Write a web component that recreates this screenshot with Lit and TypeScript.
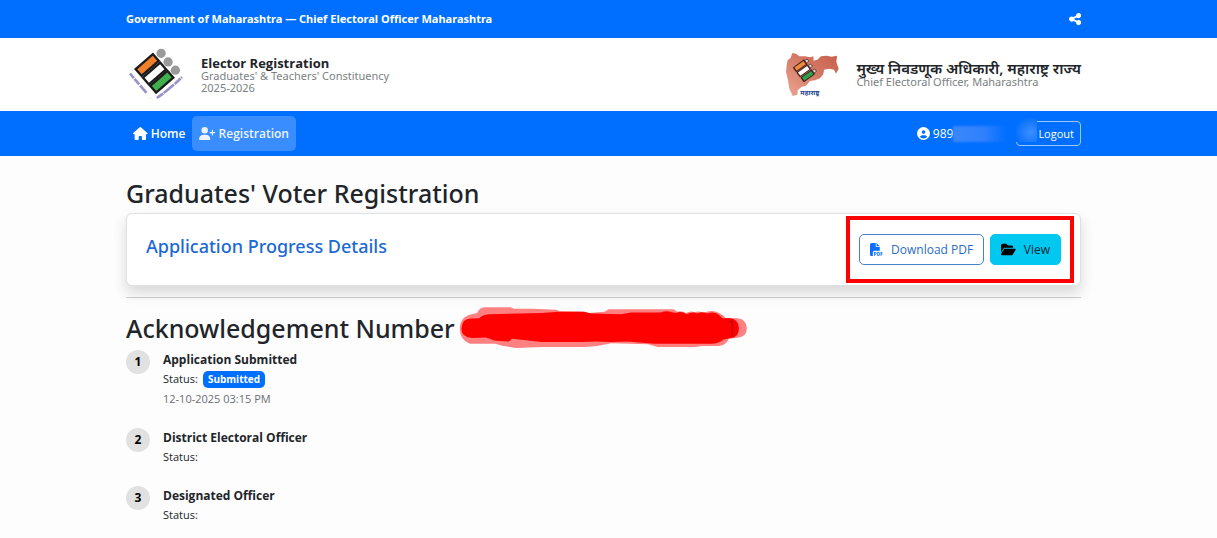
import { LitElement, html, css, svg, nothing } from "lit";
import { customElement, property } from "lit/decorators.js";

const ICONS: Record<string, [number, string]> = {
  share: [448, "M352 224c53 0 96-43 96-96s-43-96-96-96s-96 43-96 96c0 4 .2 8 .7 11.9l-94.1 47C145.4 170.2 121.9 160 96 160c-53 0-96 43-96 96s43 96 96 96c25.9 0 49.4-10.2 66.6-26.9l94.1 47c-.5 3.9-.7 7.8-.7 11.9c0 53 43 96 96 96s96-43 96-96s-43-96-96-96c-25.9 0-49.4 10.2-66.6 26.9l-94.1-47c.5-3.9 .7-7.8 .7-11.9s-.2-8-.7-11.9l94.1-47C302.6 213.8 326.1 224 352 224z"],
  house: [576, "M575.8 255.5c0 18-15 32.1-32 32.1h-32l.7 160.2c0 2.7-.2 5.4-.5 8.1V472c0 22.1-17.9 40-40 40H456c-1.1 0-2.2 0-3.3-.1c-1.4 .1-2.8 .1-4.2 .1H416 392c-22.1 0-40-17.9-40-40V448 384c0-17.7-14.3-32-32-32H256c-17.7 0-32 14.3-32 32v64 24c0 22.1-17.9 40-40 40H160 128.1c-1.5 0-3-.1-4.5-.2c-1.2 .1-2.4 .2-3.6 .2H104c-22.1 0-40-17.9-40-40V360c0-.9 0-1.9 .1-2.8V287.6H32c-18 0-32-14-32-32.1c0-9 3-17 10-24L266.4 8c7-7 15-8 22-8s15 2 21 7L564.8 231.5c8 7 12 15 11 24z"],
  userPlus: [640, "M96 128a128 128 0 1 1 256 0A128 128 0 1 1 96 128zM0 482.3C0 383.8 79.8 304 178.3 304h91.4C368.2 304 448 383.8 448 482.3c0 16.4-13.3 29.7-29.7 29.7H29.7C13.3 512 0 498.7 0 482.3zM504 312V248H440c-13.3 0-24-10.7-24-24s10.7-24 24-24h64V136c0-13.3 10.7-24 24-24s24 10.7 24 24v64h64c13.3 0 24 10.7 24 24s-10.7 24-24 24H552v64c0 13.3-10.7 24-24 24s-24-10.7-24-24z"],
  user: [512, "M399 384.2C376.9 345.8 335.4 320 288 320H224c-47.4 0-88.9 25.8-111 64.2c35.2 39.2 86.2 63.8 143 63.8s107.8-24.7 143-63.8zM0 256a256 256 0 1 1 512 0A256 256 0 1 1 0 256zm256 16a72 72 0 1 0 0-144 72 72 0 1 0 0 144z"],
  folder: [576, "M88.7 223.8L0 375.8V96C0 60.7 28.7 32 64 32H181.5c17 0 33.3 6.7 45.3 18.7l26.5 26.5c12 12 28.3 18.7 45.3 18.7H416c35.3 0 64 28.7 64 64v32H144c-22.8 0-43.8 12.1-55.3 31.8zm27.6 16.1C122.1 230 132.6 224 144 224H544c11.5 0 22 6.1 27.7 16.1s5.7 22.2-.1 32.1l-112 192C453.9 474 443.4 480 432 480H32c-11.5 0-22-6.1-27.7-16.1s-5.7-22.2 .1-32.1l112-192z"],
  pdf: [512, "M0 64C0 28.7 28.7 0 64 0H224V128c0 17.7 14.3 32 32 32H384V304H176c-35.3 0-64 28.7-64 64V512H64c-35.3 0-64-28.7-64-64V64zm384 64H256V0L384 128zM176 352h32c30.9 0 56 25.1 56 56s-25.1 56-56 56H192v32c0 8.8-7.2 16-16 16s-16-7.2-16-16V448 368c0-8.8 7.2-16 16-16zm32 80c13.3 0 24-10.7 24-24s-10.7-24-24-24H192v48h16zm96-80h32c26.5 0 48 21.5 48 48v64c0 26.5-21.5 48-48 48H304c-8.8 0-16-7.2-16-16V368c0-8.8 7.2-16 16-16zm32 128c8.8 0 16-7.2 16-16V400c0-8.8-7.2-16-16-16H320v96h16zm80-112c0-8.8 7.2-16 16-16h48c8.8 0 16 7.2 16 16s-7.2 16-16 16H448v32h32c8.8 0 16 7.2 16 16s-7.2 16-16 16H448v48c0 8.8-7.2 16-16 16s-16-7.2-16-16V432 368z"],
};

@customElement("fa-icon")
class FaIcon extends LitElement {
  @property() name = "house";
  static styles = css`
    :host { display: inline-flex; flex: none; }
    svg { display: block; height: var(--icon-size, 13px); width: auto; fill: currentColor; }
  `;
  render() {
    const [w, d] = ICONS[this.name];
    return html`<svg viewBox="0 0 ${w} 512" aria-hidden="true"><path d=${d}></path></svg>`;
  }
}

@customElement("commission-logo")
class CommissionLogo extends LitElement {
  static styles = css`
    :host { display: block; flex: none; }
    svg { display: block; width: 57px; height: 53px; }
  `;
  render() {
    const bar = (x: number, y: number, fill: string) => svg`
      <g transform="translate(${x} ${y}) rotate(-41)">
        <rect x="-38" y="-17" width="76" height="34" fill="#1c1a1a"></rect>
        <rect x="-31" y="-10" width="62" height="20" fill=${fill}></rect>
      </g>`;
    return html`<svg viewBox="55 140 170 160" role="img" aria-label="Election Commission emblem">
      ${bar(112, 191, "#f0802a")}${bar(156, 242, "#3fb04b")}${bar(134, 217, "#ffffff")}
      <g fill="#9a9a9a"><circle cx="154" cy="156" r="14"></circle><circle cx="175" cy="182" r="14"></circle><circle cx="197" cy="207" r="14"></circle></g>
      <g stroke="#9a92c8" stroke-width="8" fill="none">
        <path d="M60 217L122 290" stroke-dasharray="18 3 22 4 30"></path>
        <path d="M141 291Q180 264 217 228" stroke-dasharray="24 2 40 3"></path>
      </g>
    </svg>`;
  }
}

@customElement("state-logo")
class StateLogo extends LitElement {
  static styles = css`
    :host { display: block; flex: none; }
    svg { display: block; width: 55px; height: 45px; overflow: visible; }
    .name { font: 700 20px "Noto Sans Devanagari", "Noto Sans", sans-serif; fill: #24458c; }
  `;
  render() {
    const bar = (x: number, y: number, fill: string) => svg`
      <g transform="translate(${x} ${y}) rotate(-36)">
        <rect x="-22" y="-9" width="42" height="18" rx="2" fill="#3a201c"></rect>
        <rect x="-18" y="-6" width="34" height="12" fill=${fill}></rect>
        <circle cx="24" cy="0" r="5" fill="#e8d8d2" stroke="#3a201c" stroke-width="2"></circle>
      </g>`;
    return html`<svg viewBox="75 155 165 135" role="img" aria-label="Maharashtra">
      <defs><linearGradient id="g" x1="0" y1="1" x2="1" y2="0">
        <stop offset="0" stop-color="#eda693"></stop><stop offset=".5" stop-color="#d67c6a"></stop><stop offset="1" stop-color="#c65c47"></stop>
      </linearGradient></defs>
      <path fill="url(#g)" d="M83 180L92 172L97 158L108 160L118 168L135 168L150 171L160 168L161 181L172 178L183 168L200 166L215 169L231 166L229 185L236 205L228 220L222 208L208 205L192 208L190 222L180 234L165 240L150 242L138 256L124 260L113 270L112 283L98 287L88 265L84 240L78 215L80 195Z"></path>
      ${bar(121, 196, "#ef8a3c")}${bar(132, 211, "#ffffff")}${bar(144, 226, "#2fa04a")}
      <text class="name" x="121" y="283">महाराष्ट्र</text>
    </svg>`;
  }
}

interface Step { title: string; badge?: string; time?: string }

const STEPS: Step[] = [
  { title: "Application Submitted", badge: "Submitted", time: "12-10-2025 03:15 PM" },
  { title: "District Electoral Officer" },
  { title: "Designated Officer" },
];

@customElement("app-root")
class AppRoot extends LitElement {
  static styles = css`
    :host {
      display: block;
      min-height: 100vh;
      background: #fdfdfd;
      color: #212529;
      font-family: "Open Sans", "Noto Sans", "Noto Sans Devanagari", sans-serif;
      font-size: 12px;
      line-height: 18px;
    }
    * { box-sizing: border-box; }
    h1, h2, p, ol { margin: 0; padding: 0; }
    a { color: inherit; text-decoration: none; }
    button { font: inherit; cursor: pointer; }
    .band { padding-right: 10px; }
    .container { max-width: 955px; margin: 0 auto; }
    .row { display: flex; align-items: center; justify-content: space-between; }
    .blue { background: #006fff; color: #fff; }
    .top, .sub, h1, h2 { font-family: "Noto Sans", sans-serif; }
    .top .row { height: 38px; font-weight: 700; font-size: 11px; }
    .top fa-icon { display: block; --icon-size: 14px; }
    .header { background: #fff; }
    .header .row { height: 73px; }
    .brand { display: flex; align-items: center; gap: 16px; padding-left: 2px; }
    .name { font-size: 13px; font-weight: 700; line-height: 14px; }
    .sub { font-size: 11px; line-height: 12px; color: #7b7f83; }
    .hindi { font-size: 15px; font-weight: 600; line-height: 15px; }
    .nav .row { height: 45px; }
    .links, .account { display: flex; align-items: center; }
    .link {
      display: flex; align-items: center; gap: 3px;
      height: 35px; padding: 0 7px; border-radius: 5px;
      font-weight: 600;
    }
    .active { background: #3a8dff; color: #eaf3ff; }
    .account { gap: 10px; }
    .phone { display: flex; align-items: center; gap: 3px; }
    .digits { display: flex; align-items: center; }
    .smudge { width: 53px; height: 16px; background: linear-gradient(90deg, #3a88fc, #2f80fd 60%, #006fff); filter: blur(1px); }
    .logout {
      position: relative; height: 25px; padding: 0 6px 0 21px;
      border: 1px solid #9cc8ff; border-radius: 4px;
      background: transparent; color: #fff; font-size: 11px;
    }
    .logout::before {
      content: ""; position: absolute; left: -1px; top: -4px; width: 21px; height: 24px;
      background: radial-gradient(at 70% 60%, #3f8eff, #006fff 80%);
    }
    h1, h2 { font-size: 25px; font-weight: 500; line-height: 30px; }
    main { padding-top: 22px; }
    .card {
      position: relative;
      display: flex; align-items: flex-start; justify-content: space-between;
      margin-top: 5px; padding: 20px 19px;
      background: #fff; border: 1px solid #dfe0e2; border-radius: 6px;
      box-shadow: 0 7px 14px rgba(0, 0, 0, .15);
    }
    .card h2 { font-size: 18px; line-height: 25px; color: #1c69d4; }
    .actions { display: flex; gap: 6px; }
    .btn {
      display: flex; align-items: center; gap: 8px;
      height: 31px; padding: 0 10px; border-radius: 5px;
      border: 1px solid #4683c9; background: #fff; color: #2c6cc4;
    }
    .btn fa-icon { color: #0d6efd; }
    .view { border-color: #00c8f0; background: #00c8f0; color: #0b2c36; }
    .view fa-icon { color: #000; }
    .highlight {
      position: absolute; right: 6px; top: 2px; bottom: 2px; width: 228px;
      border: 4px solid #f00; pointer-events: none;
    }
    hr { height: 1px; margin: 11px 0 15px; border: 0; background: #cfcfd1; }
    .ack { display: flex; align-items: center; gap: 3px; }
    .mark { display: block; flex: none; width: 290px; height: 41px; margin: -8px 0 -6px; }
    .steps { list-style: none; display: grid; gap: 19px; margin-top: 7px; }
    .step { display: grid; grid-template-columns: 24px 1fr; gap: 13px; }
    .num {
      display: grid; place-items: center; width: 24px; height: 24px;
      border-radius: 50%; background: #e1e1e2; color: #000; font-weight: 700;
    }
    .title { font-weight: 700; line-height: 19px; }
    .status, .time { font-size: 11px; line-height: 20px; }
    .time { color: #6a6e72; }
    .status { display: flex; align-items: center; gap: 5px; }
    .badge {
      padding: 0 5px; border-radius: 5px; background: #006fff; color: #fff;
      font-size: 10px; font-weight: 700; line-height: 17px;
    }
  `;

  render() {
    return html`
      <div class="band blue top"><div class="container row">
        <span>Government of Maharashtra — Chief Electoral Officer Maharashtra</span>
        <a href="#share" aria-label="Share"><fa-icon name="share"></fa-icon></a>
      </div></div>
      <header class="band header"><div class="container row">
        <div class="brand">
          <commission-logo></commission-logo>
          <div>
            <p class="name">Elector Registration</p>
            <p class="sub">Graduates' &amp; Teachers' Constituency</p>
            <p class="sub">2025-2026</p>
          </div>
        </div>
        <div class="brand">
          <state-logo></state-logo>
          <div>
            <p class="hindi" lang="mr">मुख्य निवडणूक अधिकारी, महाराष्ट्र राज्य</p>
            <p class="sub">Chief Electoral Officer, Maharashtra</p>
          </div>
        </div>
      </div></header>
      <nav class="band blue nav"><div class="container row">
        <div class="links">
          <a class="link" href="#home"><fa-icon name="house"></fa-icon>Home</a>
          <a class="link active" href="#registration"><fa-icon name="userPlus"></fa-icon>Registration</a>
        </div>
        <div class="account">
          <span class="phone"><fa-icon name="user"></fa-icon><span class="digits">989<span class="smudge"></span></span></span>
          <button class="logout">Logout</button>
        </div>
      </div></nav>
      <div class="band"><main class="container">
        <h1>Graduates' Voter Registration</h1>
        <section class="card">
          <h2>Application Progress Details</h2>
          <div class="actions">
            <button class="btn"><fa-icon name="pdf"></fa-icon>Download PDF</button>
            <button class="btn view"><fa-icon name="folder"></fa-icon>View</button>
          </div>
          <div class="highlight"></div>
        </section>
        <hr />
        <div class="ack">
          <h2>Acknowledgement Number</h2>
          <svg class="mark" viewBox="50 32 870 124" aria-hidden="true">
            <path fill="#ff8080" d="M52 98Q52 62 88 54L104 50Q112 34 126 33H205L216 37H270L345 40L352 45H425L440 50L490 46L502 39H698L710 46Q722 42 736 50Q750 42 762 48Q776 42 790 50Q806 42 820 45Q840 48 856 65L892 66Q920 70 920 96Q920 122 892 125L866 128Q856 148 836 150H785L765 153H650L622 145L510 142Q470 152 430 153H300L222 156L180 149L160 143H82Q52 132 52 98Z"></path>
            <path fill="#f00" d="M57 98Q58 66 88 67L110 66Q120 56 140 54L300 50L350 46L430 47L450 52L540 54L570 49H660Q675 42 690 47L706 50Q722 42 738 54Q756 44 770 52Q788 44 800 52Q820 44 836 56L846 66H870Q896 70 896 96Q896 124 872 126L850 130Q836 142 812 143H640L560 136L510 138Q460 134 420 138H300L210 128L200 136L160 134L130 124L90 126Q57 124 57 98Z"></path>
            <path d="M864 77L876 75V122" fill="none" stroke="#c00000" stroke-width="4"></path>
          </svg>
        </div>
        <ol class="steps">
          ${STEPS.map((s, i) => html`
            <li class="step">
              <span class="num">${i + 1}</span>
              <div>
                <p class="title">${s.title}</p>
                <p class="status">Status: ${s.badge ? html`<span class="badge">${s.badge}</span>` : nothing}</p>
                ${s.time ? html`<p class="time">${s.time}</p>` : nothing}
              </div>
            </li>`)}
        </ol>
      </main></div>
    `;
  }
}
